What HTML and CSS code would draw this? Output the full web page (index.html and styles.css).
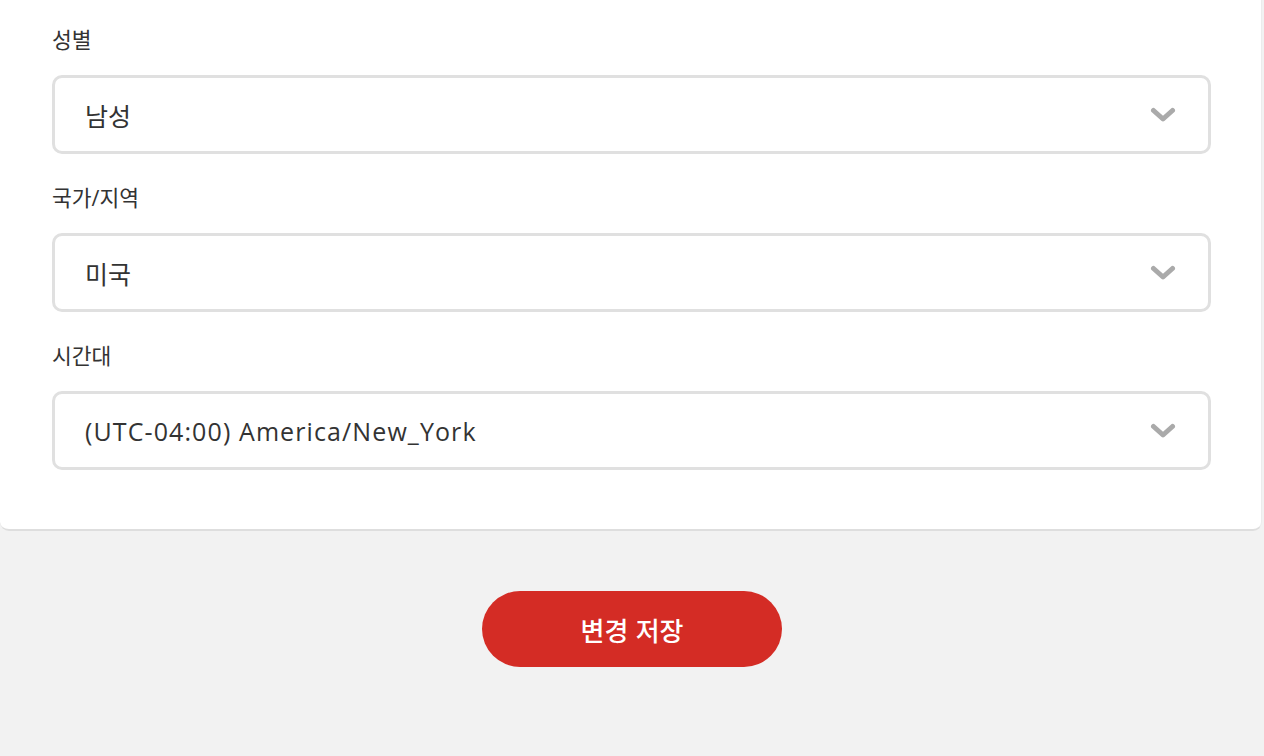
FILE: index.html
```html
<!DOCTYPE html>
<html lang="ko">
<head>
<meta charset="utf-8">
<title>프로필</title>
<link rel="stylesheet" href="styles.css">
</head>
<body>
<div class="card">
  <div class="field">
    <div class="label">성별</div>
    <div class="select"><span class="value">남성</span>
      <svg class="chev" width="26" height="16" viewBox="0 0 26 16"><path d="M3.5 3.5 L13 12 L22.5 3.5" fill="none" stroke="#aaaaaa" stroke-width="5" stroke-linecap="round" stroke-linejoin="round"/></svg>
    </div>
  </div>
  <div class="field">
    <div class="label">국가/지역</div>
    <div class="select"><span class="value">미국</span>
      <svg class="chev" width="26" height="16" viewBox="0 0 26 16"><path d="M3.5 3.5 L13 12 L22.5 3.5" fill="none" stroke="#aaaaaa" stroke-width="5" stroke-linecap="round" stroke-linejoin="round"/></svg>
    </div>
  </div>
  <div class="field">
    <div class="label">시간대</div>
    <div class="select"><span class="value latin">(UTC-04:00) America/New_York</span>
      <svg class="chev" width="26" height="16" viewBox="0 0 26 16"><path d="M3.5 3.5 L13 12 L22.5 3.5" fill="none" stroke="#aaaaaa" stroke-width="5" stroke-linecap="round" stroke-linejoin="round"/></svg>
    </div>
  </div>
</div>
<div class="actions">
  <button class="save">변경 저장</button>
</div>
</body>
</html>
```
FILE: styles.css
```css
html, body {
  margin: 0;
  padding: 0;
}
body {
  background: #f2f2f2;
  font-family: "Open Sans", "Noto Sans CJK KR", sans-serif;
  color: #333333;
  height: 756px;
  overflow: hidden;
}
.card {
  background: #ffffff;
  margin-right: 2px;
  padding: 26px 50px 59px 52px;
  border-bottom: 2px solid #dedede;
  border-right: 1px solid #ececec;
  border-radius: 0 0 9px 9px;
  display: flex;
  flex-direction: column;
  gap: 30px;
}
.field {
  display: flex;
  flex-direction: column;
  gap: 21px;
}
.label {
  font-size: 21.5px;
  line-height: 28px;
  color: #333333;
}
.select {
  height: 73px;
  border: 3px solid #e0e0e0;
  border-radius: 10px;
  display: flex;
  align-items: center;
  justify-content: space-between;
  padding: 0 32px 0 30px;
  background: #ffffff;
}
.value {
  font-size: 25px;
  color: #333333;
}
.value.latin {
  font-size: 25px;
  letter-spacing: 1.1px;
}
.chev {
  display: block;
}
.actions {
  display: flex;
  justify-content: center;
  padding-top: 60px;
}
.save {
  width: 300px;
  height: 76px;
  border: none;
  border-radius: 38px;
  background: #d42c25;
  color: #ffffff;
  font-family: "Noto Sans CJK KR", sans-serif;
  font-size: 26px;
  font-weight: 500;
  cursor: pointer;
}
```
